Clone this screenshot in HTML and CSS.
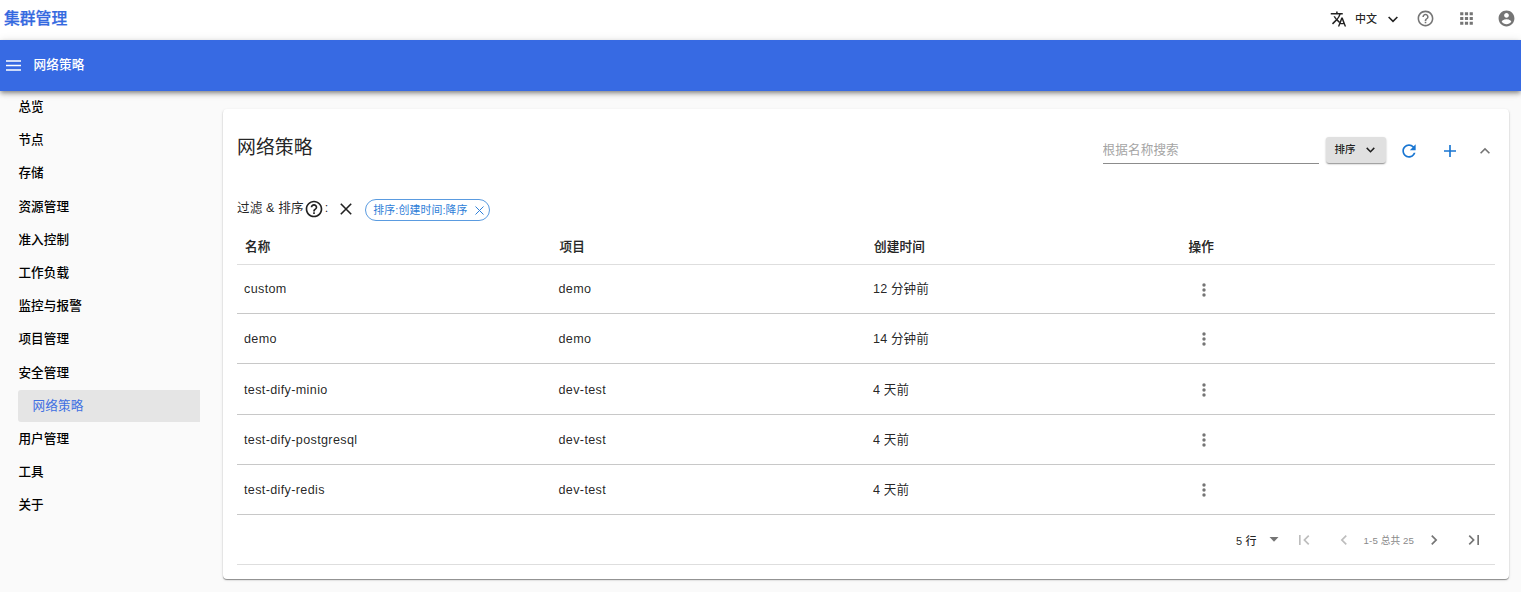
FILE: index.html
```
<!DOCTYPE html>
<html lang="zh-CN">
<head>
<meta charset="utf-8">
<title>集群管理</title>
<link rel="stylesheet" href="styles.css">
</head>
<body>
<header class="topbar">
  <div class="brand">集群管理</div>
  <div class="tools">
    <button class="lang">
      <svg class="i18" viewBox="0 0 24 24"><path d="M21.5 22h-2l-1.1-3h-4.8l-1.1 3h-2l4.5-12h2zM14.4 17.300h3.200L16 12.900zM10.200 2h-2v2H1v2h11.200a17.500 17.500 0 0 1-3.200 5.600A15.700 15.700 0 0 1 6.700 8.200h-2a17.600 17.600 0 0 0 3 4.600l-5.100 5L4 19.200l5-5 3.100 3.100.8-2-2.600-2.500A20 20 0 0 0 14.200 6H17V4h-6.800z"/></svg>
      <span>中文</span>
      <svg class="i14" viewBox="0 0 24 24"><path d="M4.500 8.500 12 16l7.500-7.500" fill="none" stroke="currentColor" stroke-width="2.700"/></svg>
    </button>
    <svg class="i19 help" viewBox="0 0 24 24"><path d="M11 18h2v-2h-2v2zm1-16C6.480 2 2 6.480 2 12s4.480 10 10 10 10-4.480 10-10S17.520 2 12 2zm0 18c-4.410 0-8-3.590-8-8s3.590-8 8-8 8 3.590 8 8-3.590 8-8 8zm0-14c-2.210 0-4 1.790-4 4h2c0-1.100.9-2 2-2s2 .9 2 2c0 2-3 1.750-3 5h2c0-2.250 3-2.500 3-5 0-2.210-1.790-4-4-4z"/></svg>
    <svg class="i19 apps" viewBox="0 0 24 24"><path d="M4 8h4V4H4v4zm6 12h4v-4h-4v4zm-6 0h4v-4H4v4zm0-6h4v-4H4v4zm6 0h4v-4h-4v4zm6-10v4h4V4h-4zm-6 4h4V4h-4v4zm6 6h4v-4h-4v4zm0 6h4v-4h-4v4z"/></svg>
    <svg class="i19 user" viewBox="0 0 24 24"><path d="M12 2C6.480 2 2 6.480 2 12s4.480 10 10 10 10-4.480 10-10S17.520 2 12 2zm0 3c1.660 0 3 1.340 3 3s-1.340 3-3 3-3-1.340-3-3 1.340-3 3-3zm0 14.200c-2.500 0-4.710-1.280-6-3.220.03-1.990 4-3.080 6-3.080 1.990 0 5.970 1.090 6 3.080-1.290 1.940-3.500 3.220-6 3.220z"/></svg>
  </div>
</header>
<div class="appbar">
  <svg class="menu" viewBox="0 0 15 11"><path d="M0 1h15M0 5.500h15M0 10h15" stroke="currentColor" stroke-width="1.600"/></svg>
  <span>网络策略</span>
</div>
<div class="layout">
  <nav class="side">
    <a>总览</a><a>节点</a><a>存储</a><a>资源管理</a><a>准入控制</a><a>工作负载</a><a>监控与报警</a><a>项目管理</a><a>安全管理</a><a class="active"><span>网络策略</span></a><a>用户管理</a><a>工具</a><a>关于</a>
  </nav>
  <main class="card">
    <div class="cardhead">
      <h1>网络策略</h1>
      <input class="search" placeholder="根据名称搜索">
      <button class="sort"><span>排序</span><svg class="i14" viewBox="0 0 24 24"><path d="M5 9l7 7 7-7" fill="none" stroke="currentColor" stroke-width="2.700"/></svg></button>
      <svg class="i20 refresh" viewBox="0 0 24 24"><path d="M17.650 6.350C16.200 4.900 14.210 4 12 4c-4.420 0-7.990 3.580-7.990 8s3.570 8 7.990 8c3.730 0 6.840-2.550 7.730-6h-2.080c-.82 2.330-3.040 4-5.650 4-3.310 0-6-2.690-6-6s2.690-6 6-6c1.660 0 3.140.69 4.220 1.780L13 11h7V4l-2.350 2.350z"/></svg>
      <svg class="i18 add" viewBox="0 0 24 24"><path d="M20 13.100h-6.900V20h-2.200v-6.900H4v-2.200h6.900V4h2.200v6.900H20z"/></svg>
      <svg class="i20 fold" viewBox="0 0 24 24"><path d="M12 8l-6 6 1.410 1.410L12 10.830l4.590 4.580L18 14z"/></svg>
    </div>
    <div class="filters">
      <span>过滤 &amp; 排序</span>
      <svg class="i20 fhelp" viewBox="0 0 24 24"><path d="M11 18h2v-2h-2v2zm1-16C6.480 2 2 6.480 2 12s4.480 10 10 10 10-4.480 10-10S17.520 2 12 2zm0 18c-4.410 0-8-3.590-8-8s3.590-8 8-8 8 3.590 8 8-3.590 8-8 8zm0-14c-2.210 0-4 1.790-4 4h2c0-1.100.9-2 2-2s2 .9 2 2c0 2-3 1.750-3 5h2c0-2.250 3-2.500 3-5 0-2.210-1.790-4-4-4z"/></svg>
      <span>:</span>
      <svg class="clear" viewBox="0 0 12 12"><path d="M.8.8l10.400 10.400M11.200.8.8 11.200" stroke="currentColor" stroke-width="1.600"/></svg>
      <span class="chip"><span>排序:创建时间:降序</span><svg viewBox="0 0 9 9"><path d="M.5.5l8 8M8.500.5l-8 8" stroke="currentColor" stroke-width="1"/></svg></span>
    </div>
    <div class="table">
      <div class="row th"><span>名称</span><span>项目</span><span>创建时间</span><span>操作</span></div>
      <div class="row"><span class="name">custom</span><span class="name">demo</span><span>12 分钟前</span><svg class="dots" viewBox="0 0 4 14"><circle cx="2" cy="2" r="1.700"/><circle cx="2" cy="7" r="1.700"/><circle cx="2" cy="12" r="1.700"/></svg></div>
      <div class="row"><span class="name">demo</span><span class="name">demo</span><span>14 分钟前</span><svg class="dots" viewBox="0 0 4 14"><circle cx="2" cy="2" r="1.700"/><circle cx="2" cy="7" r="1.700"/><circle cx="2" cy="12" r="1.700"/></svg></div>
      <div class="row low"><span class="name">test-dify-minio</span><span class="name">dev-test</span><span>4 天前</span><svg class="dots" viewBox="0 0 4 14"><circle cx="2" cy="2" r="1.700"/><circle cx="2" cy="7" r="1.700"/><circle cx="2" cy="12" r="1.700"/></svg></div>
      <div class="row low"><span class="name">test-dify-postgresql</span><span class="name">dev-test</span><span>4 天前</span><svg class="dots" viewBox="0 0 4 14"><circle cx="2" cy="2" r="1.700"/><circle cx="2" cy="7" r="1.700"/><circle cx="2" cy="12" r="1.700"/></svg></div>
      <div class="row low"><span class="name">test-dify-redis</span><span class="name">dev-test</span><span>4 天前</span><svg class="dots" viewBox="0 0 4 14"><circle cx="2" cy="2" r="1.700"/><circle cx="2" cy="7" r="1.700"/><circle cx="2" cy="12" r="1.700"/></svg></div>
    </div>
    <div class="pager">
      <span class="size">5 行</span>
      <svg class="caret" viewBox="0 0 10 5"><path d="M.5 0h9L5 4.700z"/></svg>
      <svg class="i20 first off" viewBox="0 0 24 24"><path d="M18.410 16.590L13.820 12l4.590-4.590L17 6l-6 6 6 6zM6 6h2v12H6z"/></svg>
      <svg class="i20 prev off" viewBox="0 0 24 24"><path d="M15.410 7.410L14 6l-6 6 6 6 1.410-1.410L10.830 12z"/></svg>
      <span class="range">1-5 总共 25</span>
      <svg class="i20 next" viewBox="0 0 24 24"><path d="M10 6L8.590 7.410 13.170 12l-4.580 4.590L10 18l6-6z"/></svg>
      <svg class="i20 last" viewBox="0 0 24 24"><path d="M5.590 7.410L10.180 12l-4.590 4.590L7 18l6-6-6-6zM16 6h2v12h-2z"/></svg>
    </div>
  </main>
</div>
</body>
</html>
```
FILE: styles.css
```
* { box-sizing: border-box; }
body {
  margin: 0;
  height: 592px;
  overflow: hidden;
  background: #fafafa;
  color: rgba(0, 0, 0, .87);
  font: 12.6px/18px "Liberation Sans", "Noto Sans CJK SC", sans-serif;
  letter-spacing: .13px;
}
svg { display: block; flex: none; fill: currentColor; }
button { border: 0; background: none; padding: 0; color: inherit; font: inherit; letter-spacing: inherit; display: flex; align-items: center; }
.i14 { width: 14px; height: 14px; }
.i18 { width: 18px; height: 18px; }
.i19 { width: 19px; height: 19px; }
.i20 { width: 20px; height: 20px; }

.topbar { height: 40px; background: #fff; display: flex; justify-content: space-between; padding: 0 5px 3px 4px; align-items: center; }
.brand { color: #3469e0; font-size: 15.800px; font-weight: 500; letter-spacing: 0; -webkit-text-stroke: .250px; }
.tools { display: flex; align-items: center; color: #757575; }
.lang { color: rgba(0, 0, 0, .87); font-size: 11px; font-weight: 500; letter-spacing: 0; }
.lang span { margin: 0 9px 0 7px; }
.help { margin: 0 0 0 16px; }
.apps { margin-left: 22px; }
.user { margin-left: 21px; }

.appbar {
  position: relative;
  height: 51px;
  background: #376ae3;
  color: #fff;
  display: flex;
  align-items: center;
  padding: 0 6px 2px;
  font-weight: 500;
  box-shadow: 0 2px 4px -1px rgba(0, 0, 0, .3), 0 3px 5px rgba(0, 0, 0, .2), 0 1px 9px rgba(0, 0, 0, .12);
}
.menu { width: 15px; height: 11px; margin: 1px 12.500px 0 0; }

.layout { display: flex; align-items: flex-start; }
.side { width: 223px; padding-left: 18px; margin-top: -.600px; color: #000; font-weight: 500; }
.side a { display: flex; align-items: center; height: 33.200px; padding-left: .400px; }
.side .active { padding-left: 0; }
.active span { width: 182px; height: 32px; padding: 7px 14.500px; border-radius: 3px 0 0 3px; background: #e5e5e5; color: #3f70e2; font-weight: 400; }

.card {
  width: 1286px;
  height: 470px;
  margin-top: 18px;
  padding: 0 14px;
  background: #fff;
  border-radius: 4px;
  box-shadow: 0 1px 1px rgba(0, 0, 0, .4), 0 1px 3px rgba(0, 0, 0, .12);
}
.cardhead { display: flex; align-items: center; height: 82px; color: #1976d2; }
h1 { margin: 0 auto 5px 0; color: rgba(0, 0, 0, .87); font-size: 18.900px; line-height: 28px; font-weight: 400; letter-spacing: 0; }
.search { width: 216px; height: 28px; margin-right: 7px; padding: 0; border: 0; border-bottom: 1px solid #8c8c8c; outline: 0; background: none; font: inherit; letter-spacing: inherit; }
.search::placeholder { color: #a5a5a5; opacity: 1; }
.sort { width: 60px; height: 26px; padding: 0 9px 2px; border-radius: 3px; background: #e0e0e0; color: rgba(0, 0, 0, .87); font-size: 10.500px; font-weight: 500; letter-spacing: 0; justify-content: space-between; box-shadow: 0 2px 1px -1px rgba(0, 0, 0, .2), 0 1px 2px rgba(0, 0, 0, .3); }
.sort .i14 { width: 13px; height: 13px; }
.refresh { margin: 1px 0 0 13.500px; }
.add { margin: 1px 0 0 22px; }
.fold { margin: 1px 0 0 16px; color: #757575; }

.filters { display: flex; align-items: center; height: 37px; }
.filters > span:not(.chip) { padding-bottom: 4px; }
.fhelp { margin: -1px .500px 0 .500px; }
.clear { width: 12px; height: 12px; margin: -1px 13px 0 12px; }
.chip { display: flex; align-items: center; width: 125px; height: 22px; padding: 0 5.500px 0 7px; border: 1px solid #5a9be0; border-radius: 11px; color: #2f80d8; font-size: 10.900px; line-height: 20px; letter-spacing: .100px; }
.chip svg { width: 9px; height: 9px; margin: 1px 0 0 auto; }

.row { display: grid; grid-template-columns: 314.500px 314.500px 314.500px 1fr; align-items: center; height: 50.250px; padding-left: 7px; border-bottom: 1px solid #c8c8c8; }
.row span { padding-bottom: .500px; }
.low span { padding: 1.500px 0 0; }
.row .name { letter-spacing: .350px; }
.row.th { height: 37px; padding-left: 8px; font-weight: 500; border-color: #dedede; -webkit-text-stroke: .200px; }
.row.th + .row { height: 49.200px; }
.th span { padding: 1px 0 0; }
.dots { width: 4px; height: 14px; margin: 1px 0 0 14.500px; color: #757575; }

.pager { display: flex; align-items: center; height: 50px; border-bottom: 1px solid #dedede; color: #757575; padding-right: 11px; justify-content: flex-end; }
.size { color: rgba(0, 0, 0, .87); font-size: 11px; font-weight: 500; padding-top: 3px; }
.caret { width: 10px; height: 5px; margin: 0 15px 0 12px; }
.off { color: #bdbdbd; }
.prev { margin-left: 20px; }
.range { margin: 2px 10px 0; font-size: 9.700px; letter-spacing: .100px; color: #8a8a8a; }
.last { margin-left: 20px; }
```
